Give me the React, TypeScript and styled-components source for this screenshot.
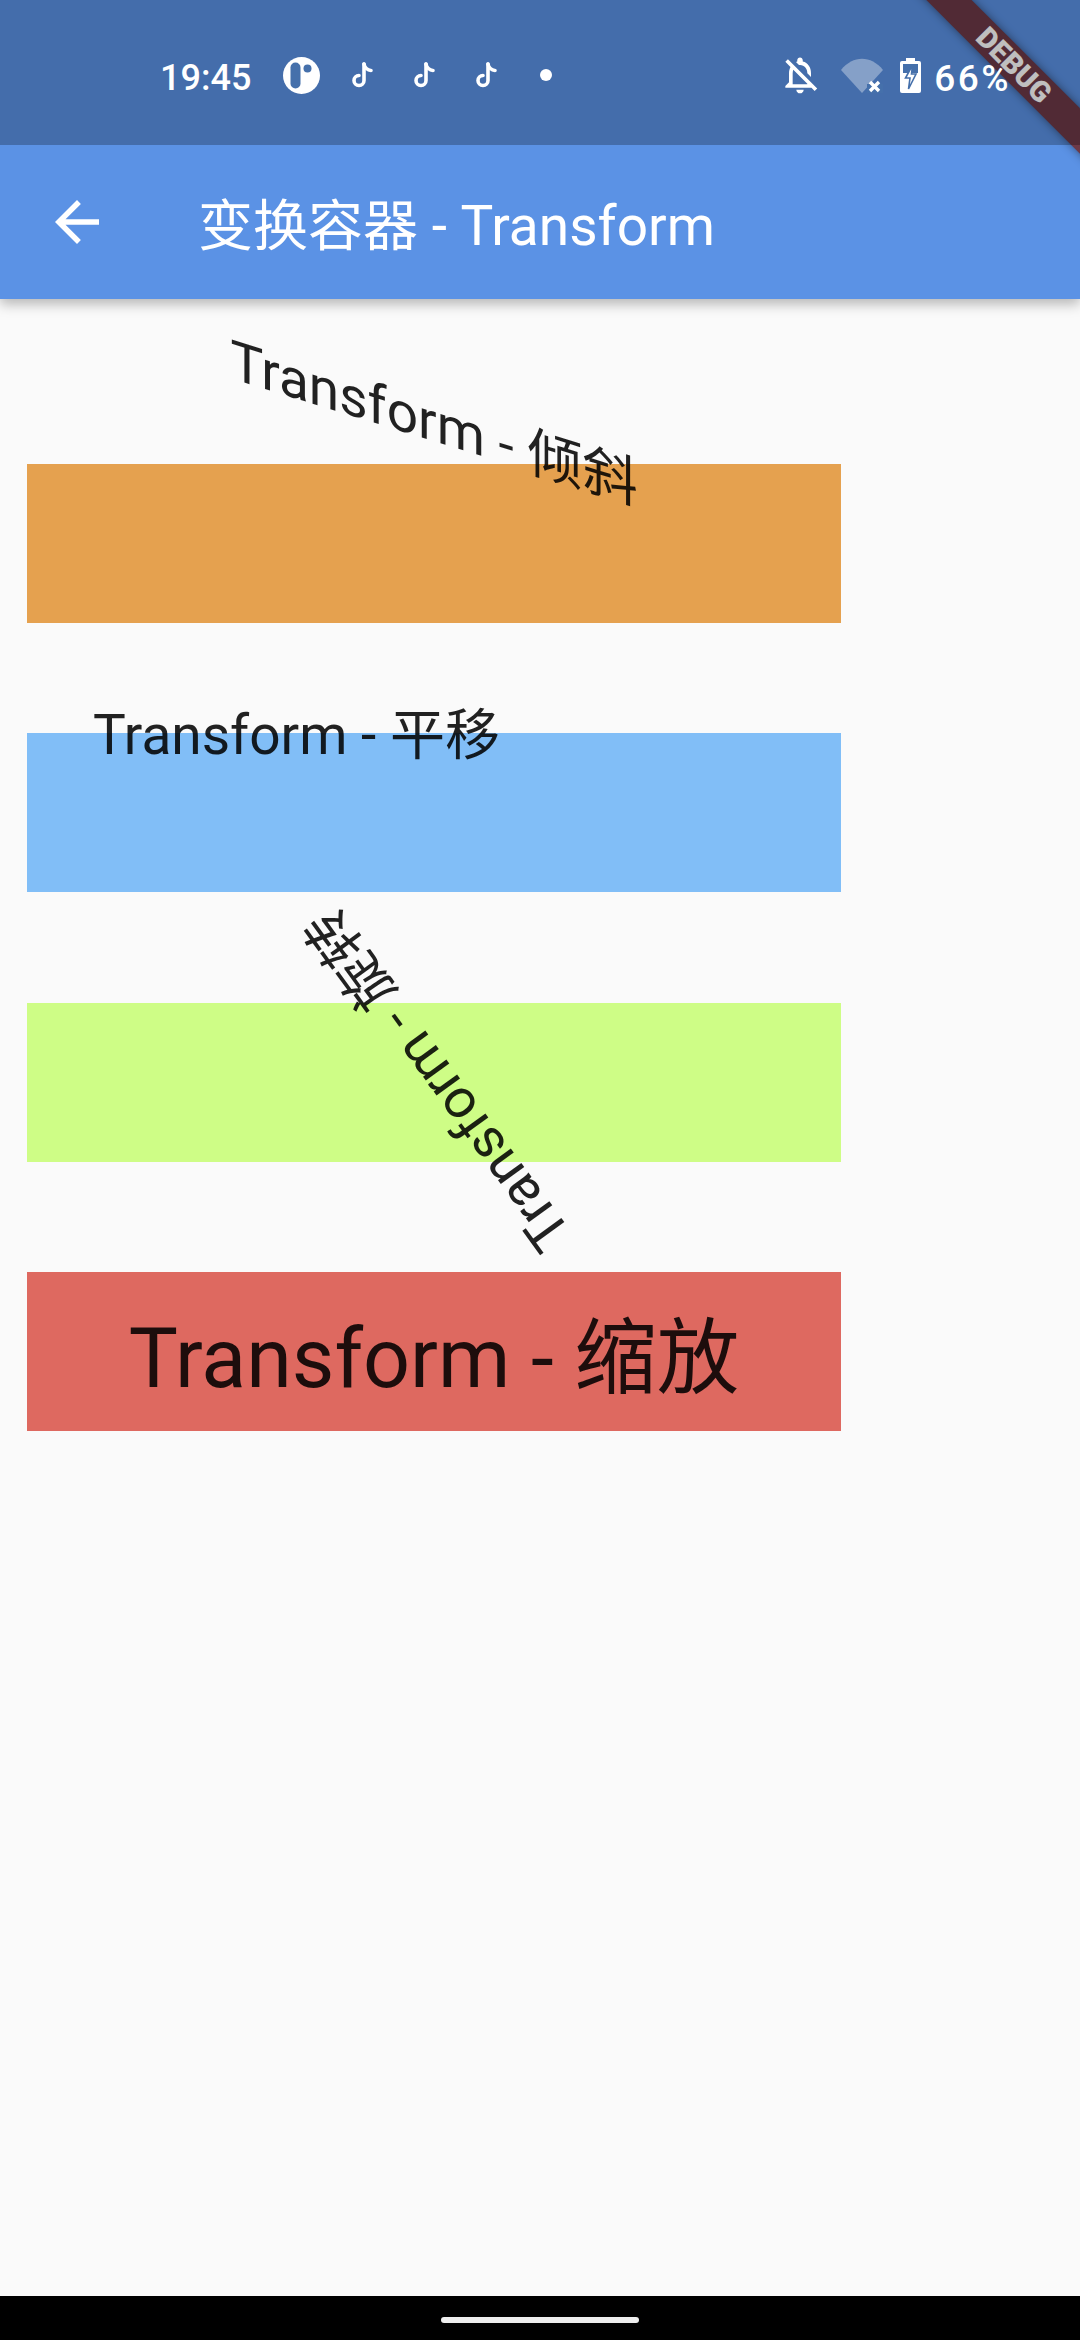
import React from 'react'
import styled, { createGlobalStyle } from 'styled-components'
import { MdArrowBack, MdOutlineNotificationsOff } from 'react-icons/md'

const GlobalStyle = createGlobalStyle`
    html, body {
        margin: 0;
        padding: 0;
        background: #fafafa;
    }
`

const FONT = `Roboto, "Noto Sans CJK SC", sans-serif`

const Page = styled.div`
    position: relative;
    width: 1080px;
    height: 2340px;
    overflow: hidden;
    display: flex;
    flex-direction: column;
    background: #fafafa;
    font-family: ${FONT};
`

const AppBar = styled.header`
    position: relative;
    z-index: 2;
    background: #5b92e5;
    box-shadow: 0 5px 12px rgba(0, 0, 0, 0.28);
`

const StatusBar = styled.div`
    position: relative;
    z-index: 2;
    height: 140px;
    padding: 5px 69px 0 160px;
    display: flex;
    align-items: center;
    justify-content: space-between;
    background: rgba(0, 0, 0, 0.25);
    color: #fff;
`

const StatusGroup = styled.div`
    display: flex;
    align-items: center;
`

const Time = styled.span`
    width: 90px;
    margin-top: 6px;
    font-size: 36px;
    font-weight: 500;
    line-height: 1;
`

const Percent = styled.span`
    margin-left: 13px;
    margin-top: 6px;
    font-size: 37px;
    font-weight: 500;
    line-height: 1;
    letter-spacing: 2.5px;
`

const BubbleIcon = styled.svg`
    width: 37px;
    height: 37px;
    margin-left: 33px;
`

const NoteIcon = styled.svg`
    width: 21px;
    height: 26px;
    margin-left: ${(p: { $gap: number }) => p.$gap}px;
    fill: none;
    stroke: #fff;
    stroke-width: 3.6;
    stroke-linecap: round;
`

const Dot = styled.span`
    width: 12px;
    height: 12px;
    margin-left: 43px;
    border-radius: 50%;
    background: #fff;
`

const BellIcon = styled(MdOutlineNotificationsOff)`
    width: 44px;
    height: 44px;
`

const WifiIcon = styled.svg`
    width: 42px;
    height: 35px;
    margin-left: 19px;
`

const BatteryIcon = styled.svg`
    width: 21px;
    height: 35px;
    margin-left: 17px;
`

const Toolbar = styled.div`
    height: 154px;
    display: flex;
    align-items: center;
    padding-left: 44px;
    color: #fff;
`

const BackIcon = styled(MdArrowBack)`
    width: 66px;
    height: 66px;
    flex: none;
`

const Title = styled.h1`
    margin: 8px 0 0 88px;
    font-size: 55px;
    font-weight: 400;
    line-height: 1;
    white-space: nowrap;
`

const Content = styled.main`
    flex: 1;
    padding: 165px 0 0 27px;
    display: flex;
    flex-direction: column;
    gap: 110.3px;
`

const Tile = styled.div<{ $color: string }>`
    width: 814px;
    height: 159px;
    background: ${(p) => p.$color};
`

const Label = styled.div<{ $transform: string; $origin?: string }>`
    box-sizing: border-box;
    width: 100%;
    height: 100%;
    padding-top: 10px;
    display: flex;
    align-items: center;
    justify-content: center;
    color: rgba(0, 0, 0, 0.87);
    font-size: 55px;
    line-height: 1;
    white-space: nowrap;
    transform: ${(p) => p.$transform};
    transform-origin: ${(p) => p.$origin ?? 'center'};
`

// sits under the status bar scrim, over the toolbar
const Banner = styled.div`
    position: absolute;
    z-index: 1;
    left: 854px;
    top: 49px;
    width: 320px;
    height: 32px;
    display: flex;
    align-items: center;
    justify-content: center;
    transform: rotate(45deg);
    background: #6d3947;
    box-shadow: 0 0 10px rgba(0, 0, 0, 0.45);
    color: #fff;
    font-size: 29px;
    font-weight: 900;
    line-height: 1;
`

const NavBar = styled.footer`
    height: 44px;
    display: flex;
    justify-content: center;
    align-items: flex-start;
    background: #000;
`

const HomeIndicator = styled.span`
    width: 198px;
    height: 6px;
    margin-top: 21px;
    border-radius: 3px;
    background: #eee;
`

const Note: React.FC<{ gap: number }> = ({ gap }) => (
    <NoteIcon $gap={gap} viewBox="0 0 21 26">
        <path d="M12 2 V18.5 A5 5 0 1 1 7 13.5" />
        <path d="M12 2 C12.5 5.5 15.5 8.5 19 8.5" />
    </NoteIcon>
)

const tiles = [
    { color: '#e5a14f', text: 'Transform - 倾斜', transform: 'skewY(0.3rad)', origin: 'top right' },
    { color: '#81bef7', text: 'Transform - 平移', transform: 'translate(-137.5px, -82.5px)' },
    { color: '#cefd86', text: 'Transform - 旋转', transform: 'rotate(234deg)' },
    { color: '#de6960', text: 'Transform - 缩放', transform: 'scale(1.5)' },
]

const App: React.FC = () => {
    return (
        <Page>
            <GlobalStyle />
            <AppBar>
                <StatusBar>
                    <StatusGroup>
                        <Time>19:45</Time>
                        <BubbleIcon viewBox="0 0 37 37">
                            <circle cx="18.5" cy="18.5" r="18.5" fill="#fff" />
                            <rect x="7.5" y="5.5" width="10" height="26" rx="5" fill="#4570ab" />
                            <circle cx="24.5" cy="11.5" r="4" fill="#4570ab" />
                        </BubbleIcon>
                        <Note gap={32} />
                        <Note gap={41} />
                        <Note gap={41} />
                        <Dot />
                    </StatusGroup>
                    <StatusGroup>
                        <BellIcon />
                        <WifiIcon viewBox="0 0 42 35">
                            <path d="M0 12 C12 -3 30 -3 42 12 L21 35 Z" fill="#fff" fillOpacity="0.35" />
                            <path d="M26 26 h16 v9 h-16 z" fill="#4570ab" />
                            <path d="M29 24 L38 33 M38 24 L29 33" stroke="#fff" strokeWidth="3.4" />
                        </WifiIcon>
                        <BatteryIcon viewBox="0 0 21 35">
                            <rect x="6" y="0" width="9" height="4" fill="#fff" />
                            <rect x="0" y="3" width="21" height="32" rx="2" fill="#fff" />
                            <rect x="3" y="6" width="15" height="9" fill="#4570ab" />
                            <path d="M12.5 7 L5.5 20 H10 L8.5 31 L16 16 H11.5 Z" fill="#fff" stroke="#4570ab" strokeWidth="1.6" />
                        </BatteryIcon>
                        <Percent>66%</Percent>
                    </StatusGroup>
                </StatusBar>
                <Banner>DEBUG</Banner>
                <Toolbar>
                    <BackIcon />
                    <Title>变换容器 - Transform</Title>
                </Toolbar>
            </AppBar>
            <Content>
                {tiles.map((tile) => (
                    <Tile key={tile.text} $color={tile.color}>
                        <Label $transform={tile.transform} $origin={tile.origin}>{tile.text}</Label>
                    </Tile>
                ))}
            </Content>
            <NavBar>
                <HomeIndicator />
            </NavBar>
        </Page>
    )
}

export default App
